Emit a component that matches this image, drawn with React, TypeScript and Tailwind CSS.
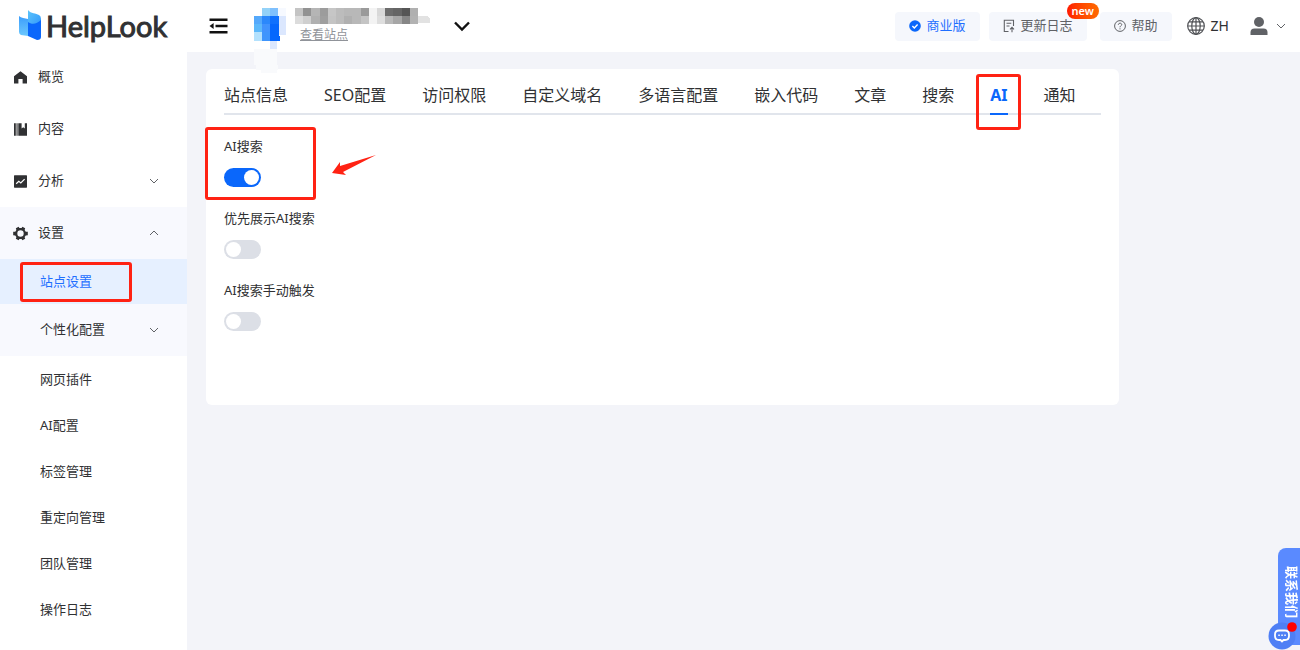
import React, { useState } from 'react'
import clsx from 'clsx'

type MosaicTile = [x: number, y: number, width: number, height: number, fill: string]

const avatarTiles: MosaicTile[] = [
    [8, 0, 8, 8, '#93d2f8'],
    [16, 0, 8, 8, '#7fc0fd'],
    [24, 0, 8, 8, '#f6f9ff'],
    [0, 8, 8, 8, '#55a9fb'],
    [8, 8, 8, 8, '#2b88fb'],
    [16, 8, 9, 8, '#0f70fd'],
    [25, 8, 7, 8, '#dbe7fe'],
    [0, 16, 8, 8, '#5cb8fb'],
    [8, 16, 8, 8, '#4193fd'],
    [16, 16, 9, 8, '#0567fd'],
    [25, 16, 7, 19, '#dbe7fe'],
    [0, 24, 8, 9, '#b3e1fd'],
    [8, 24, 8, 9, '#3f95fc'],
    [16, 24, 9, 9, '#0567fd'],
    [25, 27, 7, 8, '#ffffff'],
    [25, 28, 1, 5, '#0567fd'],
    [16, 33, 7, 8, '#dbe7fe'],
    [0, 41, 23, 16, '#f9fafc'],
    [2, 57, 22, 5, '#f9fafc'],
    [7, 62, 16, 3, '#f9fafc'],
]

const nameTop = ['#c4c4c4', '#929292', '#b5b5b5', '#9c9c9c', '#c6c6c6', '#bcbcbc', '#b8b8b8', '#b8b8b8', '#9a9a9a', '#f3f3f3', '#d8d8d8', '#6c6c6c', '#656565', '#555555', '#b0b0b0']
const nameBottom = ['#dcdcdc', '#cfcfcf', '#b0b0b0', '#9f9f9f', '#c4c4c4', '#bcbcbc', '#b0b0b0', '#b8b8b8', '#c4c4c4', '#f3f3f3', '#dedede', '#b8b8b8', '#a6a6a6', '#868686', '#b2b2b2']

const tabs = ['站点信息', 'SEO配置', '访问权限', '自定义域名', '多语言配置', '嵌入代码', '文章', '搜索', 'AI', '通知']

const extraItems = ['网页插件', 'AI配置', '标签管理', '重定向管理', '团队管理', '操作日志']

const Chevron: React.FC<{ up?: boolean }> = ({ up }) => (
    <svg className={clsx('h-[10px] w-[10px]', up && 'rotate-180')} viewBox="0 0 10 10" fill="none" stroke="#606266" strokeWidth="1">
        <path d="M1 3 L5 7 L9 3" />
    </svg>
)

const Marker: React.FC<{ className: string }> = ({ className }) => (
    <span className={clsx('pointer-events-none absolute rounded-[3px] border-3 border-[#ff2213]', className)} />
)

const Logo: React.FC = () => (
    <a href="#" className="flex h-[51px] shrink-0 items-center gap-1 pl-[18px]">
        <svg className="h-8 w-[24px]" viewBox="0 0 24 32">
            <defs>
                <linearGradient id="logoTop" x1="0" y1="0" x2="1" y2="1">
                    <stop offset="0" stopColor="#5cc4fb" />
                    <stop offset="1" stopColor="#2f95fb" />
                </linearGradient>
                <linearGradient id="logoLeft" x1="0" y1="0" x2="0" y2="1">
                    <stop offset="0" stopColor="#3a9dfc" />
                    <stop offset="1" stopColor="#6cc8fd" />
                </linearGradient>
            </defs>
            <path d="M10 0 C13 4 18 3 21 5 Q23 6 23 9 V18 L10 13 Z" fill="url(#logoTop)" />
            <path d="M1 6 C3 8 7 8 10 9 V26 L3 25 Q1 24 1 22 Z" fill="url(#logoLeft)" />
            <path d="M10 12 C14 15 19 14 23 10 V27 Q23 30 19 30 L10 26 Z" fill="#0a67fb" />
        </svg>
        <span className="font-[family-name:Lato,sans-serif] text-[29px] leading-8 font-normal text-[#303133] [-webkit-text-stroke:1px_#303133]">HelpLook</span>
    </a>
)

const Sidebar: React.FC = () => (
    <aside className="flex w-[187px] shrink-0 flex-col bg-white">
        <Logo />
        <nav className="flex flex-col text-[13px]">
            <a href="#" className="flex h-[52px] items-center gap-[11px] pl-[14px]">
                <svg className="h-[13px] w-[13px]" viewBox="0 0 13 13" fill="#303133">
                    <path d="M6.5 0.3 L13 5.2 V12.6 H8.6 V8 H4.4 V12.6 H0 V5.2 Z" />
                </svg>
                概览
            </a>
            <a href="#" className="flex h-[52px] items-center gap-[11px] pl-[14px]">
                <svg className="h-[13px] w-[13px]" viewBox="0 0 13 13" fill="#303133">
                    <path d="M0 0.3 H1.8 V12.7 H0 Z M2.5 0.3 H3.6 V12.7 H2.5 Z M4.3 0.3 H7.6 V5.4 L9.2 4.2 L10.8 5.4 V0.3 H13 V12.7 H4.3 Z" />
                </svg>
                内容
            </a>
            <button type="button" className="flex h-[52px] items-center gap-[11px] pr-[28px] pl-[14px]">
                <svg className="h-[13px] w-[13px]" viewBox="0 0 13 13">
                    <rect y="0.3" width="13" height="12.4" rx="0.6" fill="#303133" />
                    <path d="M2.2 8.8 L4.8 6.4 L6.8 8 L10.6 4.2" fill="none" stroke="#fff" strokeWidth="1.2" />
                </svg>
                分析
                <span className="ml-auto"><Chevron /></span>
            </button>
            <div className="bg-[#f8f9fe]">
                <button type="button" className="flex h-[52px] w-full items-center gap-[10px] pr-[28px] pl-[13px]">
                    <svg className="h-[15px] w-[15px]" viewBox="0 0 16 16" fill="#303133">
                        <path fillRule="evenodd" d="M6 0.8 L6.8 2.2 H9.2 L10 0.8 L13 2.5 L12.4 4.2 L13.6 6 L15.8 6.2 V9.8 L13.6 10 L12.4 11.8 L13 13.5 L10 15.2 L9.2 13.8 H6.8 L6 15.2 L3 13.5 L3.6 11.8 L2.4 10 L0.2 9.8 V6.2 L2.4 6 L3.6 4.2 L3 2.5 Z M8 4.6 A3.4 3.4 0 1 0 8 11.4 A3.4 3.4 0 1 0 8 4.6 Z" />
                    </svg>
                    设置
                    <span className="ml-auto"><Chevron up /></span>
                </button>
                <a href="#" aria-current="page" className="relative flex h-[45px] items-center bg-[#e6f0ff] pl-10 text-[#1f6fff]">
                    站点设置
                    <Marker className="top-[3px] left-5 h-10 w-[112px]" />
                </a>
                <button type="button" className="flex h-[52px] w-full items-center pr-[28px] pl-10">
                    个性化配置
                    <span className="ml-auto"><Chevron /></span>
                </button>
            </div>
            <div className="flex flex-col pt-px">
                {extraItems.map((item) => (
                    <a key={item} href="#" className="flex h-[46px] items-center pl-10">{item}</a>
                ))}
            </div>
        </nav>
    </aside>
)

const Header: React.FC = () => (
    <header className="flex h-[52px] shrink-0 items-center bg-white pr-[14px] pl-[22px] text-[13px]">
        <button type="button" aria-label="折叠菜单">
            <svg className="h-4 w-[19px]" viewBox="0 0 19 16">
                <path d="M0.5 1.7 H18.5 M6.5 8 H18.5 M0.5 14.3 H18.5" stroke="#111" strokeWidth="2.6" />
                <path d="M0.5 8 L4.6 5 V11 Z" fill="#111" />
            </svg>
        </button>
        <div className="relative ml-[26px] h-9 w-8">
            <svg className="absolute top-0 left-0 h-[65px] w-8" viewBox="0 0 32 65" shapeRendering="crispEdges">
                {avatarTiles.map(([x, y, width, height, fill]) => (
                    <rect key={`${x}-${y}`} x={x} y={y} width={width} height={height} fill={fill} />
                ))}
            </svg>
        </div>
        <div className="ml-[9px] flex h-9 flex-col">
            <svg className="h-4 w-[135px] shrink-0" viewBox="0 0 135 16" shapeRendering="crispEdges">
                {nameTop.map((fill, i) => <rect key={i} x={i * 8.2} y="0" width="8.2" height="8" fill={fill} />)}
                {nameBottom.map((fill, i) => <rect key={i} x={i * 8.2} y="8" width="8.2" height="8" fill={fill} />)}
                <path d="M123 8 H132 L135 11 V15 H123 Z" fill="#e2e2e2" />
            </svg>
            <a href="#" className="ml-[5px] pt-[2px] text-xs leading-[18px] text-[#909399] underline">查看站点</a>
        </div>
        <button type="button" aria-label="切换站点" className="ml-[23px]">
            <svg className="h-4 w-[18px]" viewBox="0 0 18 16" fill="none" stroke="#111" strokeWidth="2.4">
                <path d="M2 4.5 L9 11.5 L16 4.5" />
            </svg>
        </button>

        <div className="ml-auto flex items-center">
            <button type="button" className="flex h-[29px] items-center gap-[6px] rounded bg-[#f5f7fc] px-[14px] text-[#1f6fff]">
                <svg className="h-3 w-3" viewBox="0 0 12 12">
                    <circle cx="6" cy="6" r="5.8" fill="#0a67fb" />
                    <path d="M3.4 6 L5.3 7.9 L8.6 4.5" fill="none" stroke="#fff" strokeWidth="1.4" />
                </svg>
                商业版
            </button>
            <button type="button" className="relative ml-[9px] flex h-[29px] items-center gap-[6px] rounded bg-[#f5f7fc] px-[14px] text-[#606266]">
                <svg className="h-[14px] w-3" viewBox="0 0 12 14" fill="none" stroke="#606266" strokeWidth="1.1">
                    <path d="M10.5 7 V1.2 H1.3 V12.5 H5.5 M3.5 4.2 H8.3 M3.5 7 H6.5 M9 13.2 V8.6 M7 10.4 L9 8.4 L11 10.4" />
                </svg>
                更新日志
                <span className="absolute -top-[9px] -right-3 flex h-4 w-8 items-center justify-center rounded-full bg-linear-to-r from-[#ff1500] to-[#ff6a00] text-[11px] leading-4 font-semibold text-white">new</span>
            </button>
            <button type="button" className="ml-[13px] flex h-[29px] items-center gap-[6px] rounded bg-[#f5f7fc] px-[14px] text-[#606266]">
                <svg className="h-3 w-3" viewBox="0 0 12 12" fill="none" stroke="#606266">
                    <circle cx="6" cy="6" r="5.4" />
                    <path d="M4.3 4.8 C4.3 2.6 7.8 2.7 7.7 4.7 C7.6 5.8 6 5.9 6 7.3 M6 8.3 V9.4" />
                </svg>
                帮助
            </button>
            <button type="button" className="ml-[15px] flex items-center gap-[6px] text-sm">
                <svg className="h-[18px] w-[18px]" viewBox="0 0 18 18" fill="none" stroke="#505256" strokeWidth="1.2">
                    <circle cx="9" cy="9" r="8.3" />
                    <ellipse cx="9" cy="9" rx="4.2" ry="8.3" />
                    <path d="M9 0.7 V17.3 M0.7 9 H17.3 M2 4.8 H16 M2 13.2 H16" />
                </svg>
                ZH
            </button>
            <button type="button" aria-label="账户" className="ml-[21px] flex items-center gap-2">
                <svg className="h-[18px] w-[18px]" viewBox="0 0 18 18" fill="#606266">
                    <circle cx="9" cy="5" r="5" />
                    <path d="M0.5 18 V15.5 Q0.5 11.5 4.5 11.5 H13.5 Q17.5 11.5 17.5 15.5 V18 Z" />
                </svg>
                <Chevron />
            </button>
        </div>
    </header>
)

const SwitchField: React.FC<{ label: string; initial?: boolean; children?: React.ReactNode }> = ({ label, initial = false, children }) => {
    const [checked, setChecked] = useState(initial)

    return (
        <label className="relative flex h-[72px] flex-col items-start gap-3 text-[13px] leading-5">
            {label}
            <span className="flex h-[19px]">
                <input type="checkbox" role="switch" checked={checked} onChange={() => setChecked(!checked)} className="peer sr-only" />
                <span className={clsx('flex h-[19px] w-[37px] items-center rounded-full px-[2px] peer-focus-visible:outline-2', checked ? 'justify-end bg-[#0a67fb]' : 'bg-[#dcdfe6]')}>
                    <span className="h-[15px] w-[15px] rounded-full bg-white" />
                </span>
            </span>
            {children}
        </label>
    )
}

const ContactWidget: React.FC = () => (
    <button type="button" className="fixed right-0 bottom-0 h-[102px] w-8">
        <span className="absolute top-0 right-0 flex h-[97px] w-[22px] items-center rounded-tl-lg bg-[#5a8aff] pt-[18px] pl-1 text-[13px] font-bold text-white [text-orientation:sideways] [writing-mode:vertical-rl]">
            联系我们
        </span>
        <svg className="absolute bottom-0 left-0 h-7 w-8" viewBox="0 0 32 28">
            <circle cx="14" cy="14" r="13.5" fill="#4f7ff5" />
            <path d="M11 8.5 H17 Q21 8.5 21 12.5 V14 Q21 18 17 18 H15.5 L14 19.5 L12.5 18 H11 Q7 18 7 14 V12.5 Q7 8.5 11 8.5 Z" fill="none" stroke="#fff" strokeWidth="1.8" />
            <path d="M10.3 13.2 H11.8 M13.3 13.2 H14.8 M16.3 13.2 H17.8" stroke="#fff" strokeWidth="1.5" />
            <circle cx="24" cy="5" r="4.8" fill="#f00" />
        </svg>
    </button>
)

export default function App() {
    const [active, setActive] = useState('AI')

    return (
        <div className="flex min-h-screen bg-[#f3f4f9] font-['Noto_Sans','Noto_Sans_CJK_SC',sans-serif] text-[#303133]">
            <Sidebar />
            <div className="flex min-w-0 flex-1 flex-col">
                <Header />
                <main className="px-[19px] pt-[17px] pb-6">
                    <section className="min-h-[336px] w-full max-w-[913px] rounded-md bg-white px-[18px] pt-[10px]">
                        <div role="tablist" className="flex h-9 gap-9 border-b-2 border-[#e1e5ec] text-base whitespace-nowrap">
                            {tabs.map((tab) => (
                                <button
                                    key={tab}
                                    type="button"
                                    role="tab"
                                    aria-selected={tab === active}
                                    onClick={() => setActive(tab)}
                                    className={clsx('relative -mb-[2px] border-b-2 pb-[2px]', tab === active ? 'border-[#0a67fb] font-bold text-[#0a67fb]' : 'border-transparent')}
                                >
                                    {tab}
                                    {tab === 'AI' && <Marker className="-top-[5px] -left-[14px] h-14 w-[45px]" />}
                                </button>
                            ))}
                        </div>
                        <div className="pt-[21px]">
                            <SwitchField label="AI搜索" initial>
                                <Marker className="-top-[9px] -left-[19px] h-[73px] w-[111px]" />
                                <svg className="pointer-events-none absolute top-[18px] left-[107px] h-[22px] w-[46px]" viewBox="0 0 46 22" fill="#ff2213">
                                    <path d="M45 1 L9 12 L9 8 L1 19 L15 21 L12 18 Z" />
                                </svg>
                            </SwitchField>
                            <SwitchField label="优先展示AI搜索" />
                            <SwitchField label="AI搜索手动触发" />
                        </div>
                    </section>
                </main>
            </div>
            <ContactWidget />
        </div>
    )
}
